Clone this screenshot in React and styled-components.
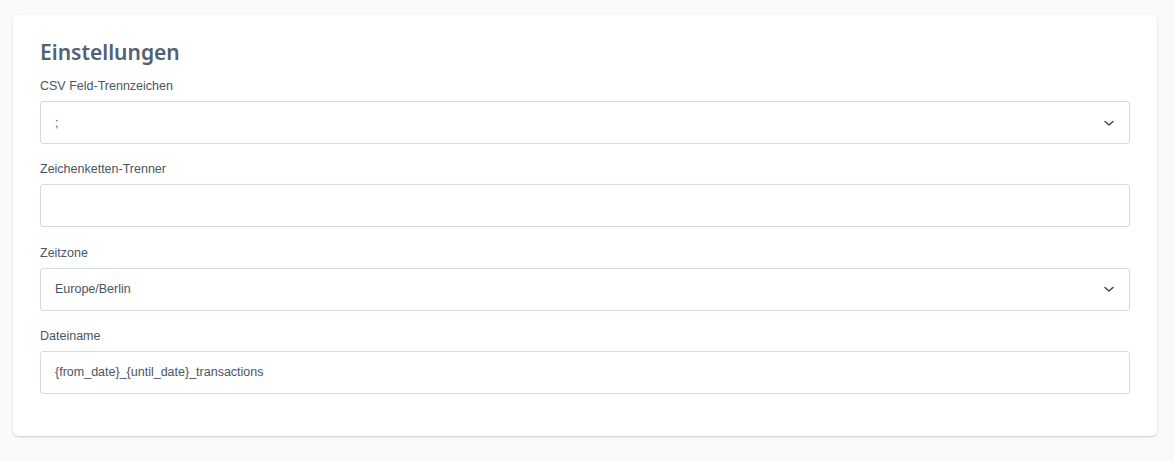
import React from 'react'
import styled, { createGlobalStyle } from 'styled-components'

const GlobalStyle = createGlobalStyle`
  body {
    margin: 0;
    background: #f8f9fb;
    font-family: "Liberation Sans", Arial, sans-serif;
  }
`

const Page = styled.div`
  padding: 15px 17px 26px 13px;
`

const Card = styled.div`
  background: #ffffff;
  border-radius: 6px;
  box-shadow: 0 1px 2px rgba(0, 0, 0, 0.18);
  padding: 21px 27px 26px 27px;
`

const Title = styled.h2`
  margin: 0 0 9px 0;
  font-family: "Noto Sans", "Open Sans", sans-serif;
  font-weight: 600;
  font-size: 21px;
  line-height: 32px;
  color: #526173;
`

const Field = styled.div`
  margin-bottom: 16.3px;
`

const Label = styled.label`
  display: block;
  font-size: 12.5px;
  line-height: 18px;
  color: #4a5565;
  margin-bottom: 6px;
`

const Box = styled.div`
  box-sizing: border-box;
  height: 43px;
  border: 1px solid #d5d9e0;
  border-radius: 3px;
  background: #fff;
  display: flex;
  align-items: center;
  padding: 0 14px;
  font-size: 12.5px;
  color: #4a5565;
`

const Value = styled.span`
  flex: 1;
`

const Chevron = () => (
  <svg width="12" height="12" viewBox="0 0 12 12" fill="none">
    <path d="M2 4.5 L6 8 L10 4.5" stroke="#3f4650" strokeWidth="1.5" strokeLinecap="round" strokeLinejoin="round" />
  </svg>
)

const fields = [
  { label: 'CSV Feld-Trennzeichen', value: ';', select: true },
  { label: 'Zeichenketten-Trenner', value: '' },
  { label: 'Zeitzone', value: 'Europe/Berlin', select: true },
  { label: 'Dateiname', value: '{from_date}_{until_date}_transactions' }
]

export default function App() {
  return (
    <Page>
      <GlobalStyle />
      <Card>
        <Title>Einstellungen</Title>
        {fields.map(f => (
          <Field key={f.label}>
            <Label>{f.label}</Label>
            <Box>
              <Value>{f.value}</Value>
              {f.select && <Chevron />}
            </Box>
          </Field>
        ))}
      </Card>
    </Page>
  )
}
